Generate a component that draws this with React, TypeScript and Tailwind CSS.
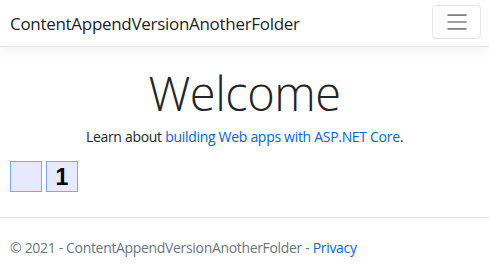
import { Fragment } from 'react';

const font = { fontFamily: '"Open Sans", "Noto Sans", sans-serif' };

const MenuIcon = () => (
  <svg width="26" height="26" viewBox="0 0 30 30" aria-hidden="true">
    <path
      d="M4 7h22M4 15h22M4 23h22"
      stroke="rgba(0,0,0,0.5)"
      strokeWidth="2"
      strokeLinecap="butt"
    />
  </svg>
);

const App = () => {
  const boxes = ['', '1'];

  return (
    <div className="min-h-[271px] bg-white text-[#212529]" style={font}>
      <header className="h-[47px] flex items-center justify-between pl-[10px] pr-[8px] border-b border-[#e5e5e5] shadow-[0_4px_10px_rgba(0,0,0,0.05)]">
        <a className="text-[17px] tracking-[-0.3px] text-black/90 leading-none">ContentAppendVersionAnotherFolder</a>
        <button className="w-[49px] h-[34px] mb-[3px] flex items-center justify-center border border-black/10 rounded-[4px]">
          <MenuIcon />
        </button>
      </header>

      <main className="text-center">
        <h1 className="mt-[18px] text-[47px] tracking-[-0.5px] font-light leading-[1.2]">Welcome</h1>
        <p className="mt-[5px] text-[14px] tracking-[-0.3px] leading-[21px]">
          Learn about{' '}
          <a className="text-[#0366d6]">building Web apps with ASP.NET Core</a>.
        </p>
        <div className="mt-[14px] pl-[10px] flex gap-[4px]">
          {boxes.map((b, i) => (
            <Fragment key={i}>
              <div
                className="w-[32px] h-[31px] border border-[#70adff] bg-[#e9e9fd] flex items-center justify-center text-[23px] font-bold text-black"
                style={{ fontFamily: '"Liberation Sans", Arial, sans-serif' }}
              >
                {b}
              </div>
            </Fragment>
          ))}
        </div>
      </main>

      <footer className="mt-[25px] border-t border-[#dee2e6] pl-[10px] text-[14px] tracking-[-0.33px] leading-[60px] text-[#6c757d]">
        © 2021 - ContentAppendVersionAnotherFolder - <a className="text-[#0366d6]">Privacy</a>
      </footer>
    </div>
  );
};

export default App;
